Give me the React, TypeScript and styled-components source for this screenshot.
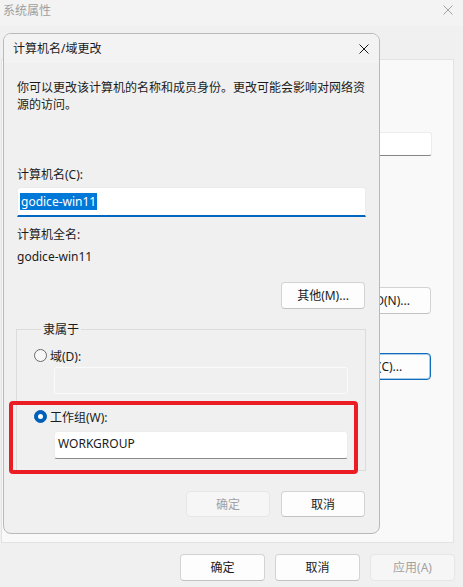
import React from "react";
import styled, { createGlobalStyle, css } from "styled-components";

const GlobalStyle = createGlobalStyle`
  html, body { margin: 0; padding: 0; background: #f0f0f0; }
  body {
    font-family: "Noto Sans", "Noto Sans CJK SC", sans-serif;
    font-size: 12px;
    color: #1b1b1b;
  }
  * { box-sizing: border-box; }
`;

const Screen = styled.div`
  position: relative;
  width: 463px;
  height: 587px;
  overflow: hidden;
  background: #f0f0f0;
  display: flex;
  flex-direction: column;
`;

const BackTitleBar = styled.div`
  height: 26px;
  flex: none;
  display: flex;
  align-items: flex-start;
  justify-content: space-between;
  padding: 2px 10px 0 3px;
  background: #f3f3f3;
  color: #a0a0a0;
  line-height: 17px;
`;

const CloseGlyph = styled.span<{ $dim?: boolean }>`
  display: flex;
  width: 10px;
  height: 10px;
  margin-top: ${(p) => (p.$dim ? "3px" : "0")};
  color: ${(p) => (p.$dim ? "#a0a0a0" : "#1b1b1b")};
`;

const BackBody = styled.div`
  flex: none;
  padding: 33px 9px 0 1px;
`;

const TabPage = styled.div`
  height: 484px;
  border: 1px solid #e3e3e3;
  background: #f9f9f9;
  display: flex;
  flex-direction: column;
  align-items: flex-end;
  padding: 72px 21px 0 0;
`;

const BackInput = styled.div`
  width: 260px;
  height: 24px;
  background: #fff;
  border: 1px solid #ececec;
  border-bottom-color: #868686;
  border-radius: 3px;
`;

const buttonBase = css`
  display: flex;
  align-items: center;
  justify-content: center;
  font: inherit;
  line-height: 17px;
  border-radius: 4px;
  background: #fdfdfd;
  border: 1px solid #d3d3d3;
  border-bottom-color: #c2c2c2;
  color: #1b1b1b;
  padding: 0;
`;

const Button = styled.button<{ $w: number; $h?: number; $disabled?: boolean; $focused?: boolean }>`
  ${buttonBase};
  flex: none;
  width: ${(p) => p.$w}px;
  height: ${(p) => p.$h ?? 27}px;
  ${(p) =>
    p.$disabled &&
    css`
      background: #f6f6f6;
      border-color: #e6e6e6;
      color: #a2a2a2;
    `}
  ${(p) =>
    p.$focused &&
    css`
      border-color: #0f6cbd;
      box-shadow: inset 0 0 0 1px rgba(15, 108, 189, 0.35);
    `}
`;

const BackButton = styled(Button)<{ $top: number }>`
  margin-top: ${(p) => p.$top}px;
  margin-right: 1px;
`;

const Footer = styled.div`
  flex: none;
  display: flex;
  justify-content: flex-end;
  gap: 10px;
  padding: 11px 8px 0 0;
`;

const Dialog = styled.div`
  position: absolute;
  left: 3px;
  top: 33px;
  width: 377px;
  border: 1px solid #b9b9b9;
  border-radius: 8px;
  background: #f0f0f0;
  overflow: hidden;
  display: flex;
  flex-direction: column;
`;

const DialogTitleBar = styled.div`
  height: 29px;
  display: flex;
  align-items: center;
  justify-content: space-between;
  padding: 0 10px 0 9px;
  background: #f3f3f3;
  line-height: 17px;
`;

const DialogBody = styled.div`
  display: flex;
  flex-direction: column;
  padding: 16px 13px 16px 13px;
`;

const Text = styled.div<{ $top?: number }>`
  margin: ${(p) => p.$top ?? 0}px 0 0 0;
  line-height: 17px;
`;

const NameInput = styled.div`
  margin-top: 4px;
  height: 30px;
  background: #fff;
  border: 1px solid #ececec;
  border-bottom: 2px solid #0067c0;
  border-radius: 3px 3px 0 0;
  display: flex;
  align-items: center;
  padding-left: 2px;
`;

const Selection = styled.span`
  background: #0078d7;
  color: #fff;
  line-height: 17px;
  padding: 0 1px;
`;

const MoreButton = styled(Button)`
  align-self: flex-end;
  margin-top: 17px;
  margin-right: 1px;
`;

const Group = styled.fieldset`
  margin: 12px 0 0 -1px;
  padding: 9px 17px 11px 17px;
  border: 1px solid #dcdcdc;
  border-radius: 0;
  min-width: 0;
  display: flex;
  flex-direction: column;
`;

const Legend = styled.legend`
  margin-left: 7px;
  padding: 0 2px;
  line-height: 17px;
`;

const RadioRow = styled.div<{ $top?: number }>`
  display: flex;
  align-items: center;
  gap: 3px;
  height: 17px;
  margin-top: ${(p) => p.$top ?? 0}px;
`;

const RadioDot = styled.span<{ $checked?: boolean }>`
  flex: none;
  width: 13px;
  height: 13px;
  border-radius: 50%;
  ${(p) =>
    p.$checked
      ? css`
          background: #005fb8;
          border: 1px solid #005fb8;
          display: flex;
          align-items: center;
          justify-content: center;
          &::after {
            content: "";
            width: 5px;
            height: 5px;
            border-radius: 50%;
            background: #fff;
          }
        `
      : css`
          background: #f7f7f7;
          border: 1px solid #6a6a6a;
        `}
`;

const GroupInput = styled.div<{ $disabled?: boolean; $top: number; $h: number }>`
  margin: ${(p) => p.$top}px 0 0 20px;
  height: ${(p) => p.$h}px;
  border-radius: 3px;
  display: flex;
  align-items: center;
  padding: 0 0 3px 3px;
  ${(p) =>
    p.$disabled
      ? css`
          background: #f0f0f0;
          border: 1px solid #fbfbfb;
        `
      : css`
          background: #fff;
          border: 1px solid #ececec;
          border-bottom-color: #8a8a8a;
        `}
`;

const ButtonRow = styled.div`
  display: flex;
  justify-content: flex-end;
  gap: 11px;
  margin: 20px 1px 0 0;
`;

const Highlight = styled.div`
  position: absolute;
  left: 9px;
  top: 401px;
  width: 349px;
  height: 73px;
  border: 4px solid #ec1c24;
  border-radius: 4px;
  pointer-events: none;
`;

const XIcon = () => (
  <svg width="10" height="10" viewBox="0 0 10 10" fill="none">
    <path d="M0.5 0.5 L9.5 9.5 M9.5 0.5 L0.5 9.5" stroke="currentColor" strokeWidth="1" />
  </svg>
);

export default function App() {
  return (
    <>
      <GlobalStyle />
      <Screen>
        <BackTitleBar>
          <span>系统属性</span>
          <CloseGlyph $dim>
            <XIcon />
          </CloseGlyph>
        </BackTitleBar>
        <BackBody>
          <TabPage>
            <BackInput />
            <BackButton $w={108} $top={131}>网络 ID(N)...</BackButton>
            <BackButton $w={106} $top={39} $focused>更改(C)...</BackButton>
          </TabPage>
        </BackBody>
        <Footer>
          <Button $w={85}>确定</Button>
          <Button $w={85}>取消</Button>
          <Button $w={85} $disabled>应用(A)</Button>
        </Footer>

        <Dialog>
          <DialogTitleBar>
            <span>计算机名/域更改</span>
            <CloseGlyph>
              <XIcon />
            </CloseGlyph>
          </DialogTitleBar>
          <DialogBody>
            <Text>你可以更改该计算机的名称和成员身份。更改可能会影响对网络资源的访问。</Text>
            <Text $top={53}>计算机名(C):</Text>
            <NameInput>
              <Selection>godice-win11</Selection>
            </NameInput>
            <Text $top={9}>计算机全名:</Text>
            <Text $top={5}>godice-win11</Text>
            <MoreButton $w={84}>其他(M)...</MoreButton>
            <Group>
              <Legend>隶属于</Legend>
              <RadioRow>
                <RadioDot />
                <span>域(D):</span>
              </RadioRow>
              <GroupInput $disabled $top={3} $h={27} />
              <RadioRow $top={14}>
                <RadioDot $checked />
                <span>工作组(W):</span>
              </RadioRow>
              <GroupInput $top={6} $h={28}>WORKGROUP</GroupInput>
            </Group>
            <ButtonRow>
              <Button $w={84} $h={26} $disabled>确定</Button>
              <Button $w={84} $h={26}>取消</Button>
            </ButtonRow>
          </DialogBody>
        </Dialog>
        <Highlight />
      </Screen>
    </>
  );
}
